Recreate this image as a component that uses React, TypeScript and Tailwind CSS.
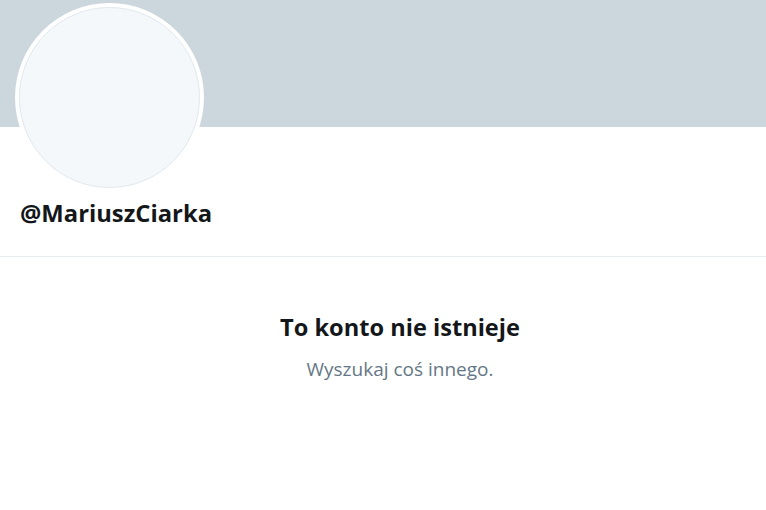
export default function App() {
  return (
    <div className="min-h-screen w-full bg-white font-['Open_Sans',sans-serif] overflow-hidden">
      {/* banner */}
      <div className="h-[127px] w-full bg-[#ccd6dd]" />

      {/* profile header */}
      <div className="flex flex-col border-b border-[#e6ecf0] pl-[15px] pb-[28px]">
        <div className="-mt-[124px] h-[189px] w-[189px] rounded-full bg-white p-[4px]">
          <div className="h-full w-full rounded-full border border-[#e1e8ed] bg-[#f5f8fa]" />
        </div>
        <div className="mt-[6px] pl-[5px] text-[23.8px] font-bold leading-[30px] text-[#14171a]">
          @MariuszCiarka
        </div>
      </div>

      {/* empty state */}
      <div className="flex flex-col items-center pl-[34px] pt-[55px]">
        <div className="text-[23.6px] font-bold leading-[30px] text-[#14171a]">
          To konto nie istnieje
        </div>
        <div className="mt-[15px] text-[19px] leading-[24px] text-[#657786]">
          Wyszukaj coś innego.
        </div>
      </div>
    </div>
  );
}
